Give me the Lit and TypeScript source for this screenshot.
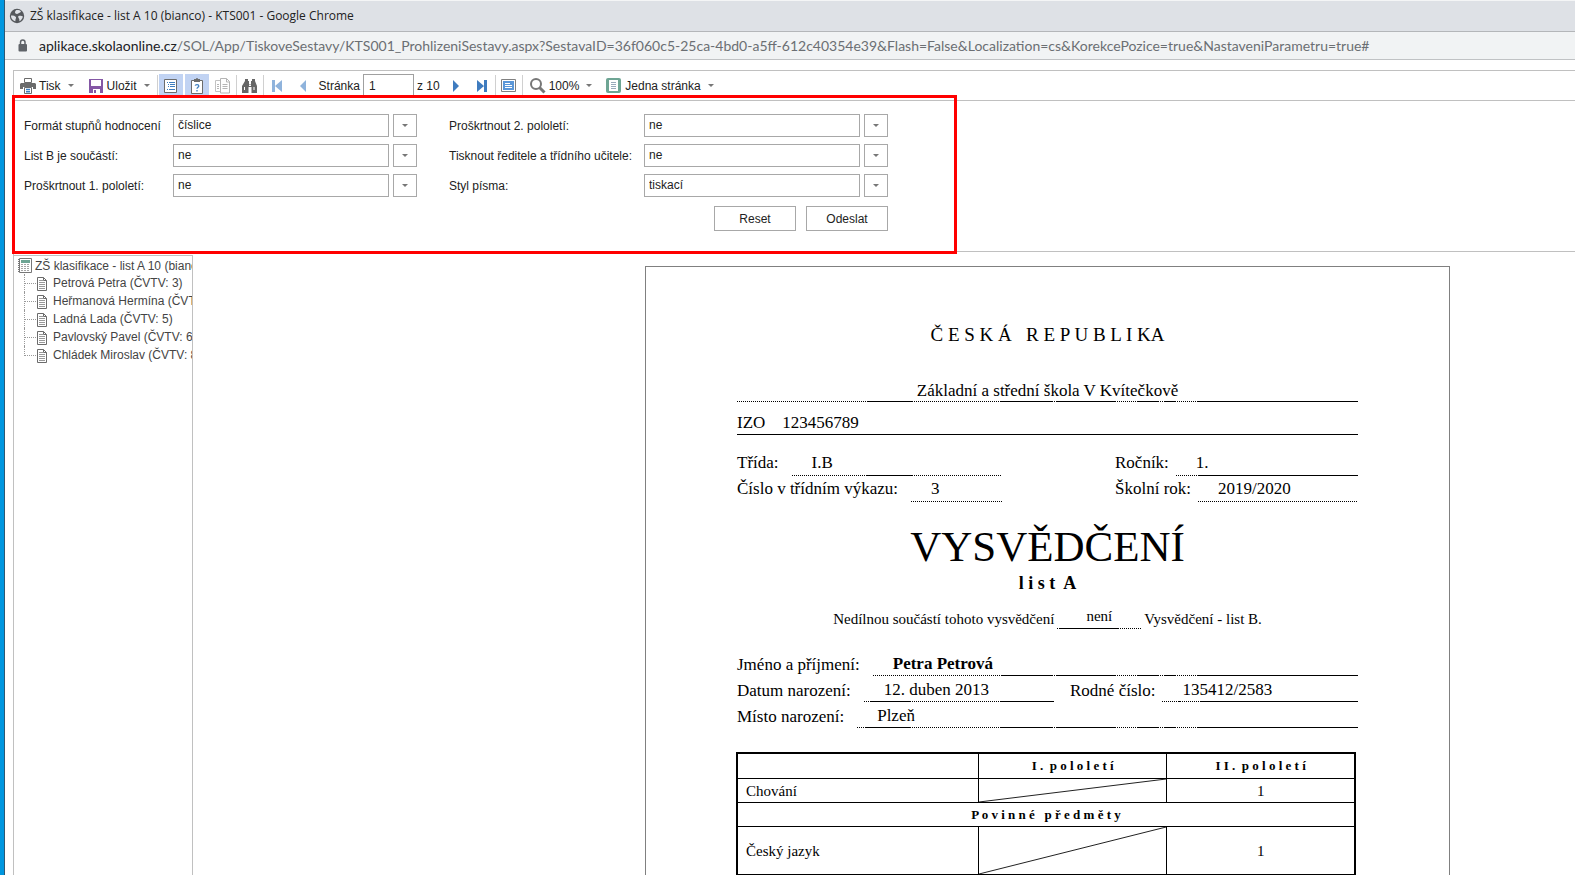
import { LitElement, html, css, svg, nothing } from "lit";
import { customElement, property } from "lit/decorators.js";

const FIELDS: { id: string; label: string; value: string; options: string[] }[] = [
  { id: "format", label: "Formát stupňů hodnocení", value: "číslice", options: ["číslice", "slovně"] },
  { id: "strike2", label: "Proškrtnout 2. pololetí:", value: "ne", options: ["ne", "ano"] },
  { id: "listb", label: "List B je součástí:", value: "ne", options: ["ne", "ano"] },
  { id: "sign", label: "Tisknout ředitele a třídního učitele:", value: "ne", options: ["ne", "ano"] },
  { id: "strike1", label: "Proškrtnout 1. pololetí:", value: "ne", options: ["ne", "ano"] },
  { id: "style", label: "Styl písma:", value: "tiskací", options: ["tiskací", "psací"] },
];

const PUPILS = [
  "Petrová Petra (ČVTV: 3)",
  "Heřmanová Hermína (ČVTV: 4)",
  "Ladná Lada (ČVTV: 5)",
  "Pavlovský Pavel (ČVTV: 6)",
  "Chládek Miroslav (ČVTV: 8)",
];

const ICONS: Record<string, unknown> = {
  print: svg`<path fill="#fff" stroke="#6b6b6b" d="M4.5 .5h7v4h-7z"/><path fill="#6b6b6b" d="M1 5h14l1 1v5h-3V9H3v2H0V6z"/><path fill="#fff" stroke="#6b6b6b" d="M4.5 9.5h7v6h-7z"/><path stroke="#3f7fc0" stroke-width="1.4" d="M6 11.5h4M6 13.7h4"/>`,
  save: svg`<path fill="#8457a5" d="M1 1h14v14H1z"/><path fill="#fff" d="M3 2h10v6H3zM5 11h7v4H5z"/><path fill="#8457a5" d="M6 12h2v3H6z"/>`,
  map: svg`<path fill="#fff" stroke="#6b6b6b" d="M1.500 1.500h12v13h-12z"/><path stroke="#3f7fc0" d="M4 4.500h1M6 4.500h6M5 6.500h1M7 6.500h5M5 8.500h1M7 8.500h5M4 11.500h1M6 11.500h6"/>`,
  params: svg`<path fill="#fff" stroke="#6b6b6b" d="M2.500 2.500h11v13h-11z"/><path fill="#6b6b6b" d="M5 1h2a1 1 0 0 1 2 0h2v3H5z"/><path fill="none" stroke="#3f7fc0" stroke-width="1.300" d="M6.200 7.700c.3-1.500 3.600-1.500 3.600.2 0 1.300-1.800 1.300-1.800 2.800M8 12v1.500"/>`,
  copy: svg`<path fill="#fff" stroke="#c2c2c2" d="M.5 2.500h8v11h-8z"/><path fill="#fff" stroke="#b5b5b5" d="M5.500 .5h6l3 3v11.500h-9z"/><path fill="none" stroke="#b5b5b5" d="M11.500 .5v3.500h3M7.500 6.500h5M7.500 8.500h5M7.500 10.500h5M2 6.500h2M2 8.500h2M2 10.500h2"/>`,
  find: svg`<path fill="#666" d="M3 1h3v2h1v3h2V3h1V1h3v2l2 5v7H9.500V9h-3v6H0V8l3-5z"/><path fill="#fff" d="M2 9h1v3H2zM11.500 9h1v3h-1zM7 6.500h2v1.500H7z"/>`,
  first: svg`<path fill="#8fb3dc" d="M3 2h3v12H3zM13 2v12L6 8z"/>`,
  prev: svg`<path fill="#8fb3dc" d="M11 2v12L5 8z"/>`,
  next: svg`<path fill="#3f7cbf" d="M5 2v12l6-6z"/>`,
  last: svg`<path fill="#3f7cbf" d="M10 2h3v12h-3zM3 2v12l7-6z"/>`,
  multi: svg`<path fill="#fff" stroke="#808080" d="M.5 1.500h14v12h-14z"/><path fill="#5b97d8" d="M2 3h11v9H2z"/><path stroke="#fff" d="M4 5.500h5M4 7.500h7M4 9.500h7"/>`,
  zoom: svg`<circle cx="6" cy="6" r="5" fill="#fff" stroke="#777" stroke-width="2"/><path stroke="#777" stroke-width="3" d="M9.500 9.500l5 5"/>`,
  page: svg`<rect x="0" y="0" width="15" height="15" rx="2" fill="#6ea594"/><path fill="#fff" d="M3 2h9v11H3z"/><path stroke="#9ab" d="M5 4.500h5M5 6.500h5M5 8.500h5M5 10.500h5"/>`,
  globe: svg`<circle cx="8" cy="8" r="7.200" fill="#55585c"/><path fill="#dee1e6" d="M2 7.500c2 0 4.500.3 5 1.800.4 1.300-.8 1.500-.6 3.900C4 12.800 1.800 10.500 2 7.500zM7 2.200c1.500-.5 4-.1 5 1.200-.6 1.400-2.100 1.100-2.700 2.200C8.300 6.500 6 6 6 4.600 6 3.500 6.300 2.700 7 2.200zM9.500 8c1.600-.6 3.600 0 4.400.6-.3 2.200-1.900 3.900-3.400 4.600-.4-1 .2-1.900-.6-2.800-.7-.8-1-1.900-.4-2.400z"/>`,
  lock: svg`<rect x="3.500" y="6" width="8.500" height="7.500" rx="1" fill="#5f6368"/><path fill="none" stroke="#5f6368" stroke-width="1.500" d="M5.500 6V4.300a2.200 2.200 0 0 1 4.500 0V6"/>`,
  report: svg`<path fill="#fff" stroke="#777" d="M1.500 .5h12v14h-12z"/><path fill="#6ea594" d="M3 2h9v3H3z"/><path stroke="#777" stroke-dasharray="1 1" d="M.5 1v14"/><path stroke="#a5a5a5" stroke-dasharray="2 1" d="M3 6.500h9M3 8.500h9M3 10.500h9M3 12.500h9"/>`,
  sheet: svg`<path fill="#fff" stroke="#6b6b6b" d="M1.500 2.500h6l3 3v10h-9z"/><path fill="none" stroke="#6b6b6b" d="M7.500 2.500v3h3"/><path stroke="#999" d="M3 5.500h4M3 7.500h6M3 9.500h6M3 11.500h6M3 13.500h6"/>`,
};

@customElement("ui-icon")
export class UiIcon extends LitElement {
  @property() name = "";
  static styles = css`
    :host { display: inline-flex; flex: none; }
    svg { display: block; width: 16px; height: 16px; }
  `;
  render() {
    return html`<svg viewBox="0 0 16 16" aria-hidden="true">${ICONS[this.name] ?? nothing}</svg>`;
  }
}

@customElement("report-toolbar")
export class ReportToolbar extends LitElement {
  static styles = css`
    :host {
      display: flex; align-items: center; gap: 2px; height: 29px;
      font: 12px/16px "Liberation Sans", Arial, sans-serif; color: #222;
      border-bottom: 1px solid #c0c0c0; white-space: nowrap;
    }
    button { font: inherit; color: inherit; border: 0; background: none; padding: 0; height: 24px; display: flex; align-items: center; }
    .menu { gap: 3px; padding: 0 6px; }
    .menu::after { content: ""; margin-left: 4px; border: 3px solid transparent; border-top-color: #777; border-bottom: 0; }
    .tool { width: 24px; justify-content: center; }
    .on { background: #c1d3f3; }
    .sep { width: 1px; height: 21px; margin: 0 -1px; background: #d0d0d0; }
    .pager { display: flex; align-items: center; gap: 3px; padding: 0 2px; }
    input { box-sizing: border-box; width: 51px; height: 23px; border: 1px solid #a0a0a0; padding: 0 5px; font: inherit; color: inherit; }
  `;
  render() {
    const tool = (icon: string, label: string, on = false) => html`
      <button class="tool ${on ? "on" : ""}" aria-label=${label}><ui-icon name=${icon}></ui-icon></button>`;
    const sep = html`<span class="sep"></span>`;
    return html`
      <button class="menu"><ui-icon name="print"></ui-icon>Tisk</button>
      <button class="menu"><ui-icon name="save"></ui-icon>Uložit</button>
      ${sep}${tool("map", "Mapa dokumentu", true)}${tool("params", "Parametry", true)}${tool("copy", "Kopírovat")}
      ${sep}${tool("find", "Hledat")}${sep}${tool("first", "První")}${tool("prev", "Předchozí")}
      <span class="pager"><label for="page">Stránka</label><input id="page" value="1" /><span>z 10</span></span>
      ${tool("next", "Další")}${tool("last", "Poslední")}${sep}${tool("multi", "Více stránek")}${sep}
      <button class="menu"><ui-icon name="zoom"></ui-icon>100%</button>
      <button class="menu"><ui-icon name="page"></ui-icon>Jedna stránka</button>
    `;
  }
}

@customElement("report-params")
export class ReportParams extends LitElement {
  static styles = css`
    :host {
      display: block; position: relative; padding: 13px 10px 20px;
      font: 12px/16px "Liberation Sans", Arial, sans-serif; color: #222;
      border-bottom: 1px solid #c0c0c0;
    }
    .mark { position: absolute; left: -2px; top: -6px; bottom: -3px; width: 939px; border: 3px solid #f00; pointer-events: none; }
    form { display: grid; width: max-content; grid-template-columns: 149px 244px 227px 244px; row-gap: 7px; align-items: center; }
    .second { padding-left: 32px; }
    .combo { display: grid; grid-template-columns: 1fr 24px; column-gap: 4px; height: 23px; }
    .frame, .arrow { box-sizing: border-box; border: 1px solid #a8a8a8; grid-row: 1; }
    .frame { grid-column: 1; }
    .arrow { grid-column: 2; display: grid; place-items: center; }
    .arrow::before { content: ""; border: 3px solid transparent; border-top-color: #777; border-bottom: 0; }
    select { grid-area: 1 / 1 / 2 / 3; appearance: none; border: 0; background: none; padding: 0 5px 2px; font: inherit; color: inherit; }
    .actions { grid-column: 1 / -1; display: flex; justify-content: flex-end; gap: 10px; padding-top: 2px; }
    button { width: 82px; height: 25px; border: 1px solid #a8a8a8; background: #fff; font: inherit; color: inherit; padding: 0; }
  `;
  render() {
    return html`
      <form @submit=${(e: Event) => e.preventDefault()}>
        ${FIELDS.map((f, i) => html`
          <label for=${f.id} class=${i % 2 ? "second" : ""}>${f.label}</label>
          <div class="combo">
            <span class="frame"></span><span class="arrow"></span>
            <select id=${f.id}>${f.options.map((o) => html`<option ?selected=${o === f.value}>${o}</option>`)}</select>
          </div>`)}
        <div class="actions"><button type="reset">Reset</button><button type="submit">Odeslat</button></div>
      </form>
      <div class="mark"></div>
    `;
  }
}

@customElement("document-map")
export class DocumentMap extends LitElement {
  static styles = css`
    :host {
      display: block; box-sizing: border-box; width: 179px; overflow: hidden; padding: 1px 0 0 4px;
      border: solid #c0c0c0; border-width: 1px 1px 0 0;
      font: 12px/18px "Liberation Sans", Arial, sans-serif; white-space: nowrap;
    }
    a { display: flex; flex: none; align-items: center; color: #444; text-decoration: none; gap: 1px; height: 18px; }
    .root { height: 17px; }
    ul { list-style: none; margin: 0 0 0 6px; padding: 0; }
    li { display: flex; border-left: 1px dotted #999; }
    li::before { content: ""; flex: none; box-sizing: border-box; width: 11px; height: 10px; border-bottom: 1px dotted #999; }
    li:last-child { border-left: 0; }
    li:last-child::before { width: 12px; border-left: 1px dotted #999; }
  `;
  render() {
    return html`
      <a class="root" href="#"><ui-icon name="report"></ui-icon>ZŠ klasifikace - list A 10 (bianco)</a>
      <ul>${PUPILS.map((p) => html`<li><a href="#"><ui-icon name="sheet"></ui-icon>${p}</a></li>`)}</ul>
    `;
  }
}

/* Runs alternate dotted, solid, dotted, … and share the line in proportion to their lengths. */
const rule = (...runs: number[]) => html`<span class="rule">${runs.map(
  (n, i) => html`<i class=${i % 2 ? "solid" : "dots"} style="flex-grow:${n}"></i>`)}</span>`;

/* Corner-to-corner stroke through a mark cell. */
const strike = html`<svg class="strike" viewBox="0 0 100 100" preserveAspectRatio="none" aria-hidden="true">
  <path d="M0 100L100 0" stroke="#222" vector-effect="non-scaling-stroke" /></svg>`;

@customElement("school-report")
export class SchoolReport extends LitElement {
  static styles = css`
    :host {
      display: block; box-sizing: border-box; width: 805px; flex: none; padding: 56px 91px 0;
      border: 1px solid #808080; border-bottom: 0; background: #fff; color: #000;
      font: 17px/20px "Liberation Serif", "Times New Roman", serif;
    }
    h1, h2, p { margin: 0; font-weight: 400; text-align: center; white-space: pre; }
    .state { font-size: 19px; line-height: 24px; }
    .school { margin-top: 34px; text-align: center; }
    .title { margin-top: 21px; font-size: 43px; line-height: 48px; }
    .list { font-size: 18px; line-height: 24px; font-weight: 700; }
    .rule { display: flex; height: 1px; overflow: hidden; }
    .rule i { flex: 0 1 0; height: 1px; }
    .solid { background: #000; }
    .dots { background: repeating-linear-gradient(90deg, #000 0 1px, #fff 1px 2px); }
    .izo { display: flex; gap: 17px; margin-top: 11px; padding-bottom: 1px; border-bottom: 1px solid #000; }
    .class { display: grid; grid-template-columns: 265px 243px; justify-content: space-between; row-gap: 3px; margin-top: 18px; }
    .row { display: flex; align-items: flex-end; gap: 13px; white-space: nowrap; }
    .tight { gap: 7px; }
    .row > span:first-child { padding-bottom: 3px; }
    .value { flex: 1; }
    .value > span:first-child { display: block; padding: 0 20px 2px; }
    .annex { display: flex; justify-content: center; align-items: flex-end; gap: 3px; margin-top: 11px; font-size: 15px; }
    .annex .value { flex: none; width: 84px; text-align: center; }
    .person { display: grid; gap: 4px; margin-top: 25px; }
    .person .row > span:first-child, .person .value > span:first-child { padding-bottom: 1px; }
    .half { display: grid; grid-template-columns: 317px 288px; justify-content: space-between; }
    b { font-weight: 700; }
    table { border-collapse: collapse; table-layout: fixed; width: 620px; margin: 24px 0 0 -1px; border: 2px solid #000; font-size: 15px; }
    td, th { border: 1px solid #000; height: 23px; padding: 0; text-align: center; }
    th { font-size: 13px; white-space: pre; }
    th[scope] { height: 24px; }
    .subject { width: 240px; }
    .term { width: 187px; }
    td:first-child { text-align: left; padding-left: 8px; }
    .strike { display: block; width: 100%; height: 23px; }
    .tall td, .tall .strike { height: 47px; }
  `;
  render() {
    const field = (label: string, value: unknown, line: unknown, cls = "") => html`
      <div class="row ${cls}"><span>${label}</span><div class="value"><span>${value}</span>${line}</div></div>`;
    return html`
      <h2 class="state">Č E S K Á   R E P U B L I KA</h2>
      <div class="school">Základní a střední škola V Kvítečkově ${rule(130, 45, 89, 51, 4, 59, 22, 21, 7, 10, 23, 160)}</div>
      <div class="izo"><span>IZO</span><span>123456789</span></div>
      <div class="class">
        ${field("Třída:", "I.B", rule(76, 45, 90))}
        ${field("Ročník:", "1.", rule(23, 160), "tight")}
        ${field("Číslo v třídním výkazu:", "3", rule(1))}
        ${field("Školní rok:", "2019/2020", rule(1), "tight")}
      </div>
      <h1 class="title">VYSVĚDČENÍ</h1>
      <p class="list">l i s t  A</p>
      <div class="annex">
        <span>Nedílnou součástí tohoto vysvědčení</span>
        <div class="value"><span>není</span>${rule(2, 59, 23)}</div>
        <span>Vysvědčení - list B.</span>
      </div>
      <div class="person">
        ${field("Jméno a příjmení:", html`<b>Petra Petrová</b>`, rule(128, 51, 4, 59, 22, 21, 7, 10, 23, 160))}
        <div class="half">
          ${field("Datum narození:", "12. duben 2013", rule(7, 39, 89, 53))}
          ${field("Rodné číslo:", "135412/2583", rule(16, 2, 20, 160), "tight")}
        </div>
        ${field("Místo narození:", "Plzeň", rule(8, 45, 90, 51, 4, 59, 22, 21, 7, 10, 23, 160))}
      </div>
      <table>
        <colgroup><col class="subject" /><col class="term" /><col class="term" /></colgroup>
        <tr><td></td><th scope="col">I .  p o l o l e t í</th><th scope="col">I I .  p o l o l e t í</th></tr>
        <tr><td>Chování</td><td>${strike}</td><td>1</td></tr>
        <tr><th colspan="3">P o v i n n é   p ř e d m ě t y</th></tr>
        <tr class="tall"><td>Český jazyk</td><td>${strike}</td><td>1</td></tr>
      </table>
    `;
  }
}

@customElement("app-root")
export class AppRoot extends LitElement {
  static styles = css`
    :host { display: flex; flex-direction: column; box-sizing: border-box; height: 100vh; overflow: hidden; background: #fff; border-left: 4px solid #0097e0; }
    .window { flex: 1; display: flex; flex-direction: column; min-height: 0; border-left: 1px solid #2d5873; }
    .titlebar, .address { display: flex; align-items: center; white-space: nowrap; overflow: hidden; flex: none; }
    .titlebar { height: 30px; gap: 5px; padding-left: 4px; background: #dee1e6; color: #222; font: 12px/16px "Open Sans", "Noto Sans", sans-serif; border-top: 1px solid #f4f5f6; border-bottom: 1px solid #b4b6b9; }
    .address { height: 27px; gap: 8px; padding-left: 10px; background: #f1f3f4; color: #6b6f73; font: 14px/20px Lato, "Open Sans", sans-serif; border-bottom: 1px solid #c0c2c4; }
    .host { color: #202124; }
    .viewer { flex: 1; display: flex; flex-direction: column; min-height: 0; margin: 10px 0 0 8px; border: solid #c0c0c0; border-width: 1px 0 0 1px; }
    .body { flex: 1; display: flex; min-height: 0; padding-top: 3px; }
    .canvas { flex: 1; display: flex; justify-content: flex-end; min-width: 0; overflow: hidden; padding: 11px 125px 0 0; }
  `;
  render() {
    return html`
      <div class="window">
        <header class="titlebar"><ui-icon name="globe"></ui-icon><span>ZŠ klasifikace - list A 10 (bianco) - KTS001 - Google Chrome</span></header>
        <div class="address"><ui-icon name="lock"></ui-icon><span><span class="host">aplikace.skolaonline.cz</span>/SOL/App/TiskoveSestavy/KTS001_ProhlizeniSestavy.aspx?SestavaID=36f060c5-25ca-4bd0-a5ff-612c40354e39&amp;Flash=False&amp;Localization=cs&amp;KorekcePozice=true&amp;NastaveniParametru=true#</span></div>
        <main class="viewer">
          <report-toolbar></report-toolbar>
          <report-params></report-params>
          <div class="body">
            <document-map></document-map>
            <div class="canvas"><school-report></school-report></div>
          </div>
        </main>
      </div>
    `;
  }
}
